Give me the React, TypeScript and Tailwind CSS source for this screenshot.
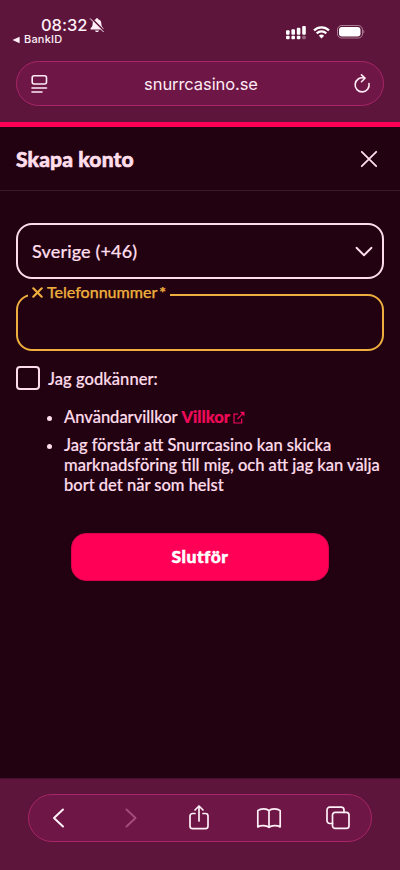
import type { ReactNode } from 'react';

function StatusBar() {
  return (
    <div className="flex h-[61px] justify-between pl-3 pr-[35px] pt-[15px] font-[Inter,sans-serif] text-[#fff0f8]">
      <div>
        <div className="flex h-[19px] items-center gap-[2px] pl-[29px]">
          <span className="text-[16.5px] font-medium leading-4 tracking-[-0.05px]">08:32</span>
          <svg width="16" height="16" viewBox="0 0 16 16">
            <path d="M8 1.2c-.8 0-1.2.5-1.2 1C4.600 2.800 3.700 4.500 3.700 6.500c0 3-1.300 3.700-2.200 5-.3.600 0 1.100.6 1.100h11.800c.6 0 .9-.5.6-1.100-.9-1.300-2.200-2-2.200-5 0-2-.9-3.700-3.100-4.300 0-.5-.4-1-1.200-1zM6 13.400c.3 1 1.100 1.500 2 1.500s1.700-.5 2-1.500z" fill="currentColor" />
            <path d="M2.200 1.200 15.200 14.200" stroke="#5e153b" strokeWidth="1.700" />
            <path d="M1.300 1.700 14.300 14.700" stroke="currentColor" strokeWidth="1" strokeLinecap="round" />
          </svg>
        </div>
        <div className="flex h-[11px] items-center gap-[4px]">
          <svg width="8" height="8" viewBox="0 0 8 8" fill="currentColor">
            <path d="M0.500 4 7.600 0.800v6.400z" />
          </svg>
          <span className="text-[11px] font-medium leading-[11px] tracking-[0.2px]">BankID</span>
        </div>
      </div>
      <div className="flex h-[34px] items-center gap-[7px] text-white">
        <svg width="20" height="15" viewBox="0 0 20 15" fill="currentColor">
          <rect x="0" y="5.300" width="3.600" height="4.400" rx="1" />
          <rect x="5.400" y="4.200" width="3.600" height="5.500" rx="1" />
          <rect x="10.800" y="2.700" width="3.600" height="7" rx="1" />
          <rect x="16.200" y="1" width="3.600" height="8.700" rx="1" />
          <rect x="0" y="10.700" width="3.600" height="3.600" rx="1" />
          <rect x="5.400" y="10.700" width="3.600" height="3.600" rx="1" />
          <rect x="10.800" y="10.700" width="3.600" height="3.600" rx="1" />
          <rect x="16.200" y="10.700" width="3.600" height="3.600" rx="1" opacity="0.350" />
        </svg>
        <svg width="17" height="13" viewBox="0 0 17 13" fill="none" stroke="currentColor" strokeWidth="2.200">
          <path d="M1 4.400a10.700 10.700 0 0 1 15 0" />
          <path d="M3.700 7.400a6.900 6.900 0 0 1 9.600 0" />
          <path d="M8.500 12.400 5.900 9.800a3.700 3.700 0 0 1 5.200 0z" fill="currentColor" stroke="none" />
        </svg>
        <svg width="28" height="14" viewBox="0 0 28 14">
          <rect x="0.500" y="0.500" width="25" height="12.500" rx="4.200" fill="none" stroke="currentColor" opacity="0.450" />
          <rect x="2" y="2" width="21.500" height="9.500" rx="2.900" fill="currentColor" />
          <path d="M26.400 4.800c1.300.5 1.300 3.400 0 3.900z" fill="currentColor" opacity="0.450" />
        </svg>
      </div>
    </div>
  );
}

function AddressBar() {
  return (
    <div className="mx-4 flex h-[45px] items-center justify-between rounded-full border border-[#a72568] bg-[#6e1645] pl-[14px] pr-[12px] text-[#ffeaf5]">
      <svg width="18" height="20" viewBox="0 0 18 20" fill="none" stroke="currentColor" strokeWidth="1.600" strokeLinecap="round">
        <rect x="1.200" y="1.700" width="14.300" height="8.300" rx="2" />
        <path d="M1 14h14.500M1 18h10" />
      </svg>
      <span className="font-[Inter,sans-serif] text-[16.5px] leading-5 tracking-[-0.080px]">snurrcasino.se</span>
      <svg width="18" height="20" viewBox="0 0 18 20" fill="none" stroke="currentColor" strokeWidth="1.600" strokeLinecap="round" strokeLinejoin="round">
        <path d="M16 9.500A7 7 0 1 1 11 4.100" />
        <path d="M8.500 .9 12 4.200 8.500 7.700" />
      </svg>
    </div>
  );
}

function ToolButton({ children, muted = false }: { children: ReactNode; muted?: boolean }) {
  return (
    <button className={muted ? 'text-[#a34c7d]' : 'text-[#fff0f8]'}>
      <svg width="28" height="28" viewBox="0 0 28 28" fill="none" stroke="currentColor" strokeWidth="1.700" strokeLinecap="round" strokeLinejoin="round">
        {children}
      </svg>
    </button>
  );
}

export default function App() {
  return (
    <div className="flex h-[870px] w-[400px] flex-col overflow-hidden bg-[#220211] font-[Lato,sans-serif] text-[#ffddeb]">
      <header className="h-[127px] border-b-[5px] border-[#ff0056] bg-[#5e153b]">
        <StatusBar />
        <AddressBar />
      </header>

      <div className="flex h-16 items-center justify-between border-b border-[#3a1928] pl-4 pr-[22px]">
        <h1 className="text-[21px] font-black tracking-[0.15px] [-webkit-text-stroke:0.6px_currentColor]">Skapa konto</h1>
        <svg width="18" height="18" viewBox="0 0 18 18" fill="none" stroke="currentColor" strokeWidth="1.800" strokeLinecap="round">
          <path d="M1.800 1.800 16.200 16.200M16.200 1.800 1.800 16.200" />
        </svg>
      </div>

      <main className="flex-1 px-4 pt-8">
        <div className="flex h-14 items-center justify-between rounded-[16px] border-2 border-[#fbdceb] pl-[14px] pr-[9px]">
          <span className="text-[18px] font-medium tracking-[0.15px] [-webkit-text-stroke:0.2px_currentColor]">Sverige (+46)</span>
          <svg width="18" height="11" viewBox="0 0 18 11" fill="none" stroke="currentColor" strokeWidth="1.900" strokeLinecap="round" strokeLinejoin="round">
            <path d="M1.500 1.800 9 9.200 16.500 1.800" />
          </svg>
        </div>

        <fieldset className="mt-[7px] h-[65px] rounded-[16px] border-2 border-[#eeae3d] pl-[10px] text-[#eeae3d]">
          <legend className="flex h-[18px] items-start gap-1 pl-1 pr-[4px]">
            <svg className="mt-[1px]" width="11" height="11" viewBox="0 0 11 11" fill="none" stroke="currentColor" strokeWidth="2.200" strokeLinecap="round">
              <path d="M1.300 1.300 9.700 9.700M9.700 1.300 1.300 9.700" />
            </svg>
            <span className="text-[16px] font-medium leading-[12px] [-webkit-text-stroke:0.25px_currentColor]">
              Telefonnummer<span className="ml-[2px] font-bold">*</span>
            </span>
          </legend>
        </fieldset>

        <label className="mt-[15px] flex h-6 items-center gap-2">
          <span className="size-6 rounded-[4px] border-2 border-[#fbdceb]" />
          <span className="pt-[2px] text-[16.5px] font-medium tracking-[0.06px] [-webkit-text-stroke:0.2px_currentColor]">Jag godkänner:</span>
        </label>

        <ul className="mt-[17px] list-disc space-y-2 pl-12 text-[16.5px] font-medium leading-5 [-webkit-text-stroke:0.2px_currentColor]">
          <li>
            <span>Användarvillkor </span>
            <a className="font-black text-[#ef0a59]">
              <span>Villkor</span>
              <svg className="ml-[3px] inline align-[-1px]" width="12" height="13" viewBox="0 0 12 13" fill="none" stroke="currentColor" strokeWidth="1.200">
                <path d="M5 3.200H1v8.800h7.700V7.500M4.500 8 9.800 2.700" />
                <path d="M6.800 .8h4.700v4.700z" fill="currentColor" stroke="none" />
              </svg>
            </a>
          </li>
          <li className="whitespace-nowrap">
            <div>Jag förstår att Snurrcasino kan skicka</div>
            <div>marknadsföring till mig, och att jag kan välja</div>
            <div>bort det när som helst</div>
          </li>
        </ul>

        <button className="mx-auto mt-[38px] flex h-[48px] w-[258px] items-center justify-center rounded-[15px] border border-[#dc004c] bg-[#ff0056] text-[17.5px] font-black tracking-[0.5px] text-white [-webkit-text-stroke:0.5px_currentColor]">
          Slutför
        </button>
      </main>

      <footer className="h-[92px] border-t border-[#4a1030] bg-[#5e153b] px-7 pt-[15px]">
        <nav className="flex h-12 items-center justify-between rounded-full border border-[#a72568] bg-[#6e1645] pl-[17px] pr-[19px]">
          <ToolButton><path d="M17 5.500 8 14l9 8.500" strokeWidth="2" /></ToolButton>
          <ToolButton muted><path d="M10.500 5.500 19.500 14l-9 8.500" strokeWidth="2" /></ToolButton>
          <ToolButton>
            <path d="M10 9.500H7.500A2.500 2.500 0 0 0 5 12v10a2.700 2.700 0 0 0 2.700 2.700h12.600A2.700 2.700 0 0 0 23 22V12a2.500 2.500 0 0 0-2.500-2.500H18M14 17V2.300M10 6l4-4 4 4" />
          </ToolButton>
          <ToolButton>
            <path d="M14 6.700C12 4.200 5.500 4.200 2.800 6.700v16.200c3-1.700 8.700-1.700 11.200.5 2.500-2.200 8.200-2.200 11.200-.5V6.700c-2.700-2.500-9.200-2.500-11.200 0zV23.300" />
          </ToolButton>
          <ToolButton>
            <path d="M8.500 19.500H5.700A2.700 2.700 0 0 1 3 16.800V5.900a2.700 2.700 0 0 1 2.700-2.700h11.600A2.700 2.700 0 0 1 20 5.900v2.500" />
            <rect x="8.500" y="8.400" width="16.500" height="16" rx="2.700" />
          </ToolButton>
        </nav>
      </footer>
    </div>
  );
}
